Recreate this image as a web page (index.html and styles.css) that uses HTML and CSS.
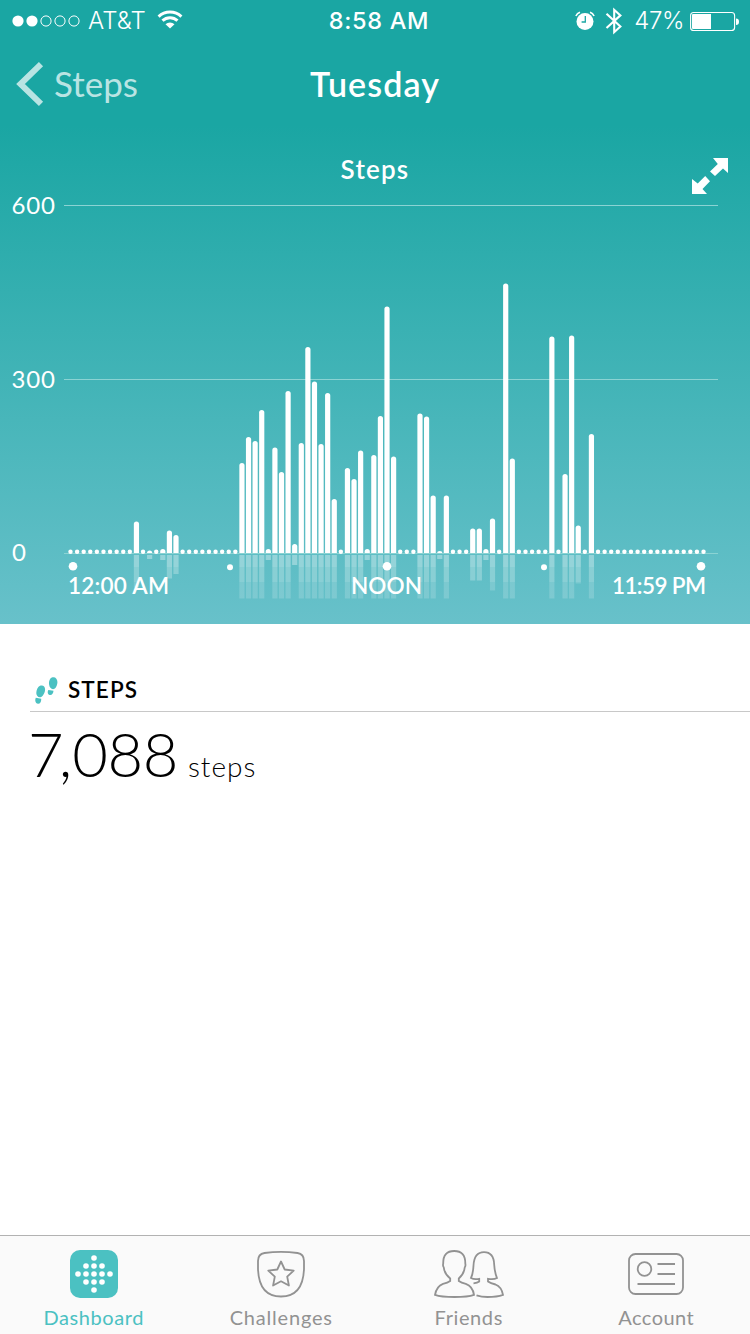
FILE: index.html
```html
<!DOCTYPE html>
<html lang="en">
<head>
<meta charset="utf-8">
<title>Tuesday</title>
<link rel="stylesheet" href="styles.css">
</head>
<body>
<div class="screen">
  <header class="hero">
    <div class="status">
      <div class="status-left">
        <svg class="signal" width="70" height="14" viewBox="0 0 70 14"><circle cx="6" cy="7" r="5.6" fill="#fff"/><circle cx="20" cy="7" r="5.6" fill="#fff"/><g fill="none" stroke="#fff"><circle cx="34" cy="7" r="5.1"/><circle cx="48" cy="7" r="5.1"/><circle cx="62" cy="7" r="5.1"/></g></svg>
        <span class="carrier">AT&amp;T</span>
        <svg class="wifi" width="26" height="19" viewBox="0 0 26 19"><g fill="none" stroke="#fff" stroke-width="3"><path d="M1.600 6.600a16.500 16.500 0 0 1 22.800 0"/><path d="M5.500 10.700a11 11 0 0 1 15 0"/></g><path d="M8.500 14.300a6.500 6.500 0 0 1 9 0L13 18.500z" fill="#fff"/></svg>
      </div>
      <span class="clock">8:58 AM</span>
      <div class="status-right">
        <svg width="20" height="20" viewBox="0 0 20 20"><circle cx="10" cy="10.500" r="8.500" fill="#fff"/><path d="M.9 5A7 7 0 0 1 5 1.300M15 1.300A7 7 0 0 1 19.100 5" fill="none" stroke="#fff" stroke-width="1.600"/><path d="M10.300 5v6H6.600" fill="none" stroke="#1aa6a3" stroke-width="1.300"/></svg>
        <svg class="bluetooth" width="18" height="28" viewBox="0 0 18 28"><path d="M1.500 6.700 15.400 19.600 9.200 25.200V2.800l6.200 5.600L1.500 21" fill="none" stroke="#fff" stroke-width="2.100"/></svg>
        <span class="percent">47%</span>
        <svg class="battery" width="50" height="20" viewBox="0 0 50 20"><rect x=".6" y="1.500" width="44" height="18" rx="3" fill="none" stroke="#fff" stroke-width="1.100"/><path d="M2 4q0-1 1-1h18v15H3q-1 0-1-1zM46 7.500q3 0 3 3.200T46 14z" fill="#fff"/></svg>
      </div>
    </div>
    <nav class="nav">
      <a class="back"><svg width="28" height="44" viewBox="0 0 28 44"><path d="M25 2.200 4.500 22 25 41.800" fill="none" stroke="#b9e4e3" stroke-width="6"/></svg><span>Steps</span></a>
      <h1 class="title">Tuesday</h1>
    </nav>
    <div class="chart-head">
      <h2 class="chart-title">Steps</h2>
      <svg class="expand" width="36" height="36" viewBox="0 0 36 36" fill="#fff"><path d="M21 0h15v15l-5-4.500L23 18l-5-4.500L25.800 6z"/><path d="M0 21v15h15l-4.500-5L18 23.300 13.200 18l-7.500 7.500z"/></svg>
    </div>
    <svg class="chart" width="750" height="435" viewBox="0 189 750 435">
      <g class="grid"><path d="M64 205.500H718M64 379.500H718M64 553.500H718"/></g>
      <g id="bars" fill="#fff"></g>
      <g class="ticks"><circle cx="73" cy="566.300" r="4.300"/><circle cx="230" cy="567.300" r="3"/><circle cx="387" cy="566.300" r="4.300"/><circle cx="544" cy="567.300" r="3"/><circle cx="701" cy="566.300" r="4.300"/></g>
      <g class="y-labels"><text x="11.500" y="213.500" textLength="43.500">600</text><text x="11.500" y="387.500" textLength="43.500">300</text><text x="12" y="560.500">0</text></g>
      <g class="x-labels"><text x="68" y="594" textLength="101">12:00 AM</text><text x="351" y="594" textLength="71">NOON</text><text x="612" y="594" textLength="94">11:59 PM</text></g>
    </svg>
  </header>
  <main class="summary">
    <div class="summary-head">
      <svg width="24" height="28" viewBox="0 0 24 28" fill="#4bc1c2"><path d="M16.800 1.500C20.500.2 23 3.300 22.300 7.500c-.5 3-1.800 5.300-3.600 5.600-2.600.3-4.200-1.600-4.600-4.600-.5-3 .6-6 2.700-7zM13.300 13.900l5.200.9c-.2 2.800-1.600 4.500-3.700 4.200-2-.3-2.700-2.700-1.500-5.100zM5 9.800c3-1.300 5.600.8 5 4.600-.4 3-2.400 6.300-4.600 6.800-2.500.2-4-1.400-4.100-3.900-.1-3.300 1.600-6.500 3.700-7.500zM.8 21.800l5.400 1c.2 2.500-.8 4.900-3 4.900-2.600 0-3.700-3.200-2.400-5.900z"/></svg>
      <h3>STEPS</h3>
    </div>
    <p class="total"><span class="number"><span class="thousands">7</span><span class="comma">,</span>088</span><span class="unit">steps</span></p>
  </main>
  <footer class="tabs">
    <a class="tab active"><svg width="48" height="48" viewBox="0 0 48 48"><rect width="48" height="48" rx="10" fill="#4bc1c2"/><g fill="#fff"><circle cx="24" cy="8" r="2.800"/><circle cx="16" cy="16" r="2.800"/><circle cx="24" cy="16" r="2.800"/><circle cx="32" cy="16" r="2.800"/><circle cx="8" cy="24" r="2.800"/><circle cx="16" cy="24" r="2.800"/><circle cx="24" cy="24" r="2.800"/><circle cx="32" cy="24" r="2.800"/><circle cx="40" cy="24" r="2.800"/><circle cx="16" cy="32" r="2.800"/><circle cx="24" cy="32" r="2.800"/><circle cx="32" cy="32" r="2.800"/><circle cx="24" cy="40" r="2.800"/></g></svg><span class="dashboard">Dashboard</span></a>
    <a class="tab"><svg class="line" width="48" height="48" viewBox="0 0 48 48"><path d="M7.500 3Q24 .8 40.500 3 47 4 47 11v8Q46 46.500 24 46.500T1 19v-8Q1 4 7.500 3z"/><path d="m24 11.500 3.700 8 9 1.200-6.500 6 1.700 8.800-7.900-4.200-7.900 4.200 1.700-8.800-6.500-6 9-1.200z" stroke-linejoin="round"/></svg><span class="challenges">Challenges</span></a>
    <a class="tab"><svg class="line" width="70" height="48" viewBox="0 0 70 48"><path d="M16.200 31v-2.500Q10.500 24 9.800 17.500 8.600 16 9.200 13.500 9 1 20.200 1T31.300 13.500q.6 2.500-.6 4Q30 24 24.800 28.500V31q2.500 1.800 7 2.800 7 2.500 8.200 11-6 2.200-19.500 2.200T1 44.800q1.500-8.500 8-11 4.700-1 7.200-2.800z"/><path d="M39.500 33.300q4-.4 5.700-1.800v-2.700q-5 1-8.200-.8 2-4 2.500-12.500Q40.200 2.200 50 2.200t10.200 12.500Q60.800 23 63 28q-3.200 1.800-9 .8v2.700q2.500 1.800 7.500 3 6 2.300 7.500 10.300-6 2.200-15.500 2.200-6 0-11-1.700"/></svg><span class="friends">Friends</span></a>
    <a class="tab"><svg class="line" width="56" height="48" viewBox="0 0 56 48"><rect x="1" y="4" width="54" height="40" rx="6.500"/><circle cx="16.500" cy="19" r="6.800"/><path d="M29.500 14h17.500M29.500 24h17.500M9.500 34H47"/></svg><span class="account">Account</span></a>
  </footer>
</div>
<script src="chart.js"></script>
</body>
</html>
```
FILE: styles.css
```css
* { box-sizing: border-box; }
body { margin: 0; background: #fff; font-family: Lato, "Liberation Sans", sans-serif; }
h1, h2, h3, p { margin: 0; font-weight: 400; }
svg { display: block; flex: none; }
.screen { width: 750px; height: 1334px; display: flex; flex-direction: column; overflow: hidden; }
.hero { height: 624px; color: #fff; background: linear-gradient(#1aa6a3 0, #1aa6a3 125px, #68c1ca 624px); }
.status { height: 40px; display: grid; grid-template-columns: 1fr auto 1fr; align-items: center; padding: 1px 10px 0 12px; font-family: Inter, sans-serif; font-size: 24px; line-height: 39px; }
.status-left, .status-right { display: flex; align-items: center; }
.status-right { justify-content: flex-end; }
.carrier { margin-left: 6px; font-weight: 300; letter-spacing: .1px; }
.wifi { margin-left: 11px; margin-top: -2px; }
.clock { font-weight: 500; font-size: 23.500px; letter-spacing: .7px; margin-left: 6px; }
.bluetooth { margin-left: 10px; }
.percent { margin-left: 11px; font-weight: 300; letter-spacing: -.4px; }
.battery { margin-left: 6px; }
.nav { height: 90px; display: grid; grid-template-columns: 1fr auto 1fr; align-items: start; padding: 22px 16px 0; }
.back { display: flex; align-items: center; gap: 10px; color: #b9e4e3; font-size: 35px; line-height: 42px; font-weight: 400; }
.back span { margin-top: -2px; }
.title { font-size: 34px; line-height: 44px; font-weight: 600; letter-spacing: 1.100px; }
.chart-head { height: 59px; display: grid; grid-template-columns: 1fr auto 1fr; padding: 23px 22px 0; }
.chart-title { grid-column: 2; font-size: 26px; line-height: 32px; font-weight: 600; letter-spacing: 1.200px; }
.expand { justify-self: end; margin-top: 5px; }
.grid { stroke: #8bd3d3; stroke-width: 1; }
.ticks { fill: #fff; }
.y-labels { fill: #fff; font-size: 24px; }
.x-labels { fill: #fff; font-size: 22.500px; font-weight: 600; }
.summary { flex: 1; padding: 52px 0 0 30px; }
.summary-head { height: 36px; display: flex; align-items: flex-start; padding-left: 5px; gap: 9px; border-bottom: 1px solid #c8c8c8; }
.summary-head h3 { font-size: 22.500px; line-height: 28px; font-weight: 600; letter-spacing: 1.100px; }
.total { display: flex; align-items: baseline; height: 90px; line-height: 82px; font-weight: 300; color: #000; }
.number { font-size: 61.500px; letter-spacing: -.4px; margin-left: -2px; }
.thousands { letter-spacing: -5px; }
.comma { letter-spacing: 0; }
.unit { font-size: 28px; margin-left: 10px; letter-spacing: 1px; }
.tabs { height: 99px; border-top: 1px solid #b2b2b2; background: #fafafa; display: grid; grid-template-columns: repeat(4, 1fr); }
.tab { display: flex; flex-direction: column; align-items: center; padding-top: 14px; color: #929292; font-size: 20px; line-height: 26px; }
.tab span { margin-top: 6px; letter-spacing: .6px; }
.tab .challenges { letter-spacing: .8px; }
.tab .account { letter-spacing: .45px; }
.active { color: #4bc1c2; }
.tab.active { color: #4bc1c2; }
.line { fill: none; stroke: #929292; stroke-width: 1.800; }
```
FILE: chart.js
```js
// Slot index -> top of the bar; slots without activity show a dot.
const tops = {
  10: 521.5, 12: 550.5, 14: 549, 15: 530.5, 16: 535,
  26: 463, 27: 437, 28: 441, 29: 410, 30: 549, 31: 447.5, 32: 472, 33: 391, 34: 544,
  35: 443, 36: 347, 37: 381.5, 38: 444, 39: 393, 40: 499,
  42: 468, 43: 479, 44: 450.5, 45: 549, 46: 455, 47: 416, 48: 306.5, 49: 456.5,
  53: 413.5, 54: 416.5, 55: 495.5, 56: 551, 57: 495.5,
  61: 528.5, 62: 528.5, 63: 549, 64: 518.5, 66: 283.5, 67: 458.5,
  73: 336.5, 75: 474, 76: 335.5, 77: 525.5, 79: 434
};
const bands = [[555, 567, .34], [567, 582, .26], [582, 598.5, .17]];
let out = '';
for (let i = 0; i < 97; i++) {
  const x = 70.5 + i * 6.594;
  const top = tops[i];
  if (top === undefined) {
    out += `<circle cx="${x}" cy="551.7" r="2.2"/>`;
    continue;
  }
  const r = Math.min(2.6, 553 - top);
  out += `<path d="M${x - 2.6} 553V${top + r}a2.6 ${r} 0 0 1 5.200 0V553z"/>`;
  const end = Math.min(598.5, 555 + Math.max(553 - top, 3) + 1);
  for (const [a, b, o] of bands) {
    if (end > a) out += `<rect x="${x - 2.6}" y="${a}" width="5.200" height="${Math.min(b, end) - a}" opacity="${o}"/>`;
  }
}
document.getElementById('bars').innerHTML = out;
```
